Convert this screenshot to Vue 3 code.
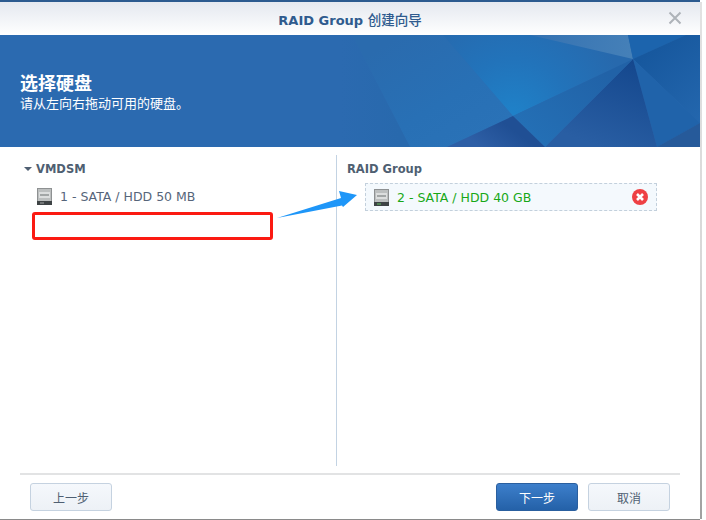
<template>
  <div class="page">
    <div class="window">
      <header class="titlebar">
        <span class="title">RAID Group <span class="cjk">创建向导</span></span>
        <svg class="close" width="14" height="14" viewBox="0 0 14 14"><path d="M1.5 1.5L12.5 12.5M12.5 1.5L1.5 12.5" stroke="#aeb3b9" stroke-width="2" fill="none"/></svg>
      </header>
      <section class="banner">
        <svg class="art" width="700" height="112" viewBox="0 0 700 112">
          <defs>
            <radialGradient id="g-up" gradientUnits="userSpaceOnUse" cx="513" cy="81" r="115">
              <stop offset="0" stop-color="#1f82c9"/><stop offset="0.5" stop-color="#2273ba"/><stop offset="1" stop-color="#2769ad"/>
            </radialGradient>
            <linearGradient id="g-mid" gradientUnits="userSpaceOnUse" x1="400" y1="0" x2="470" y2="112">
              <stop offset="0" stop-color="#2a6bae"/><stop offset="0.6" stop-color="#2870b5"/><stop offset="1" stop-color="#2a72b7"/>
            </linearGradient>
            <linearGradient id="g-left" gradientUnits="userSpaceOnUse" x1="340" y1="0" x2="400" y2="0">
              <stop offset="0" stop-color="#2b6ab0"/><stop offset="1" stop-color="#2869ad"/>
            </linearGradient>
            <linearGradient id="g-dark" gradientUnits="userSpaceOnUse" x1="632" y1="24" x2="600" y2="112">
              <stop offset="0" stop-color="#14478d"/><stop offset="1" stop-color="#295ea3"/>
            </linearGradient>
            <linearGradient id="g-wedge" gradientUnits="userSpaceOnUse" x1="600" y1="30" x2="530" y2="105">
              <stop offset="0" stop-color="#2162a7"/><stop offset="1" stop-color="#2470b6"/>
            </linearGradient>
            <linearGradient id="g-pale" gradientUnits="userSpaceOnUse" x1="540" y1="0" x2="630" y2="20">
              <stop offset="0" stop-color="#3673b2"/><stop offset="1" stop-color="#4580b8"/>
            </linearGradient>
            <linearGradient id="g-side" gradientUnits="userSpaceOnUse" x1="640" y1="25" x2="700" y2="90">
              <stop offset="0" stop-color="#17589e"/><stop offset="1" stop-color="#2467ae"/>
            </linearGradient>
            <linearGradient id="g-low" gradientUnits="userSpaceOnUse" x1="500" y1="85" x2="480" y2="112">
              <stop offset="0" stop-color="#204f94"/><stop offset="1" stop-color="#2e5fa6"/>
            </linearGradient>
          </defs>
          <polygon points="352,0 443,0 513,81 447,112 410,112" fill="url(#g-mid)"/>
          <polygon points="352,0 410,112 340,112 330,0" fill="url(#g-left)"/>
          <polygon points="443,0 700,0 633,24 513,81" fill="url(#g-up)"/>
          <polygon points="530,0 628,0 633,24" fill="url(#g-pale)"/>
          <polygon points="628,0 686,0 633,24" fill="#1c64ad"/>
          <polygon points="686,0 700,0 700,88 633,24" fill="url(#g-side)"/>
          <polygon points="633,24 700,88 657,112" fill="#2063aa"/>
          <polygon points="700,88 700,112 657,112" fill="#265a9a"/>
          <polygon points="633,24 657,112 545,112" fill="url(#g-dark)"/>
          <polygon points="633,24 545,112 513,81" fill="url(#g-wedge)"/>
          <polygon points="513,81 545,112 447,112" fill="url(#g-low)"/>
        </svg>
        <h1 class="heading">选择硬盘</h1>
        <p class="sub">请从左向右拖动可用的硬盘。</p>
      </section>
      <main class="body">
        <div class="pane left">
          <div class="group"><span class="caret"></span>VMDSM</div>
          <div class="disk">
            <svg class="hdd" width="15" height="17" viewBox="0 0 15 17"><rect width="15" height="17" fill="#8e9192"/><rect x="1" y="1" width="13" height="12" fill="#bcbfbf"/><rect x="2" y="4" width="11" height="6" fill="#dcdede"/><rect x="3" y="6" width="9" height="2" fill="#a2a6a6"/><rect y="13" width="15" height="4" fill="#3e4345"/><rect x="3" y="14.5" width="4" height="1" fill="#a3a7a7"/></svg>
            <span>1 - SATA / HDD 50 MB</span>
          </div>
        </div>
        <div class="pane right">
          <div class="group">RAID Group</div>
          <div class="disk selected">
            <svg class="hdd" width="15" height="17" viewBox="0 0 15 17"><rect width="15" height="17" fill="#8e9192"/><rect x="1" y="1" width="13" height="12" fill="#bcbfbf"/><rect x="2" y="4" width="11" height="6" fill="#dcdede"/><rect x="3" y="6" width="9" height="2" fill="#a2a6a6"/><rect y="13" width="15" height="4" fill="#3e4345"/><rect x="3" y="14.5" width="4" height="1" fill="#5fc05f"/></svg>
            <span>2 - SATA / HDD 40 GB</span>
            <svg class="remove" width="16" height="16" viewBox="0 0 16 16"><circle cx="8" cy="8" r="8" fill="#ee4044"/><path d="M5 5L11 11M11 5L5 11" stroke="#fff" stroke-width="2.6" fill="none"/></svg>
          </div>
        </div>
      </main>
      <footer class="footer">
        <button class="btn">上一步</button>
        <span class="spacer"></span>
        <button class="btn primary">下一步</button>
        <button class="btn">取消</button>
      </footer>
      <div class="redbox"></div>
      <svg class="arrow" width="90" height="34" viewBox="0 0 90 34"><polygon points="1,32 65,12 63,5 81,9 67,21 66,19.5" fill="#1e96f8"/></svg>
    </div>
  </div>
</template>

<script setup>
</script>

<style>
html, body { margin: 0; background: #fff; }
</style>

<style scoped>
.page {
  width: 706px;
  height: 520px;
  background: #fff;
  overflow: hidden;
}
.window {
  position: relative;
  width: 700px;
  height: 517px;
  display: flex;
  flex-direction: column;
  background: #fff;
  border-bottom: 1px solid #8a8a8a;
  border-top: 2px solid #2b5a8f;
  font-family: "DejaVu Sans", "Noto Sans CJK SC", sans-serif;
}
.window::after {
  content: "";
  position: absolute;
  left: 100%;
  top: 0;
  bottom: 0;
  width: 2px;
  background: linear-gradient(#e2e2e2, #d8d8d8 50%, #a0a0a0);
}
.titlebar {
  height: 33px;
  flex: none;
  display: flex;
  align-items: center;
  justify-content: center;
  position: relative;
  background: linear-gradient(#e4e8ef, #fff);
}
.title {
  font-size: 13px;
  font-weight: 700;
  color: #2f5b8e;
}
.cjk { font-family: "Noto Sans CJK SC", sans-serif; font-weight: 500; font-size: 13.5px; }
.close { position: absolute; right: 18px; top: 9px; }
.banner {
  position: relative;
  height: 112px;
  flex: none;
  background: #2b6ab0;
  overflow: hidden;
  color: #fff;
  padding: 35px 0 0 20px;
  box-sizing: border-box;
  font-family: "Noto Sans CJK SC", sans-serif;
}
.art { position: absolute; left: 0; top: 0; }
.heading {
  position: relative;
  margin: 0;
  font-size: 18px;
  line-height: 24px;
  font-weight: 700;
}
.sub {
  position: relative;
  margin: 0;
  font-size: 13px;
  line-height: 17px;
}
.body {
  flex: 1;
  display: flex;
  min-height: 0;
  padding: 8px 0 0;
  margin: 0 20px;
  border-bottom: 2px solid #e2e3e4;
}
.pane { padding-top: 7px; box-sizing: border-box; margin-bottom: 7px; }
.left { width: 317px; border-right: 1px solid #c3d3e3; }
.right { flex: 1; padding-left: 10px; }
.group {
  font-size: 11.5px;
  font-weight: 700;
  line-height: 14px;
  color: #4f5f72;
  display: flex;
  align-items: center;
}
.left .group { padding-left: 4px; }
.caret {
  width: 0;
  height: 0;
  border-left: 4px solid transparent;
  border-right: 4px solid transparent;
  border-top: 4px solid #4f5f72;
  margin-right: 4px;
}
.disk {
  display: flex;
  align-items: center;
  font-size: 12.5px;
  color: #56657a;
  height: 28px;
  margin-top: 6px;
  box-sizing: border-box;
  padding-left: 17px;
}
.hdd { margin-right: 8px; flex: none; }
.selected {
  width: 292px;
  margin-left: 18px;
  color: #17a817;
  background: #f4f9fd;
  border: 1px dashed #c3d0dc;
  padding-left: 8px;
  padding-right: 8px;
  margin-top: 7px;
}
.remove { margin-left: auto; }
.footer {
  height: 44px;
  flex: none;
  display: flex;
  align-items: flex-start;
  gap: 10px;
  padding: 8px 30px 0;
  box-sizing: border-box;
}
.spacer { flex: 1; }
.btn {
  width: 82px;
  height: 28px;
  box-sizing: border-box;
  border: 1px solid #c5d2e0;
  border-radius: 3px;
  background: linear-gradient(#f5f8fc, #edf1f6);
  color: #4f5f72;
  font-family: "Noto Sans CJK SC", sans-serif;
  font-size: 12px;
  padding: 0;
}
.primary {
  background: linear-gradient(#3d7fcb, #2461a8);
  border-color: #2a5f9f;
  color: #fff;
}
.redbox {
  position: absolute;
  left: 32px;
  top: 210px;
  width: 241px;
  height: 28px;
  box-sizing: border-box;
  border: 3px solid #fb1a12;
  border-radius: 3px;
}
.arrow { position: absolute; left: 276px; top: 184px; }
</style>
